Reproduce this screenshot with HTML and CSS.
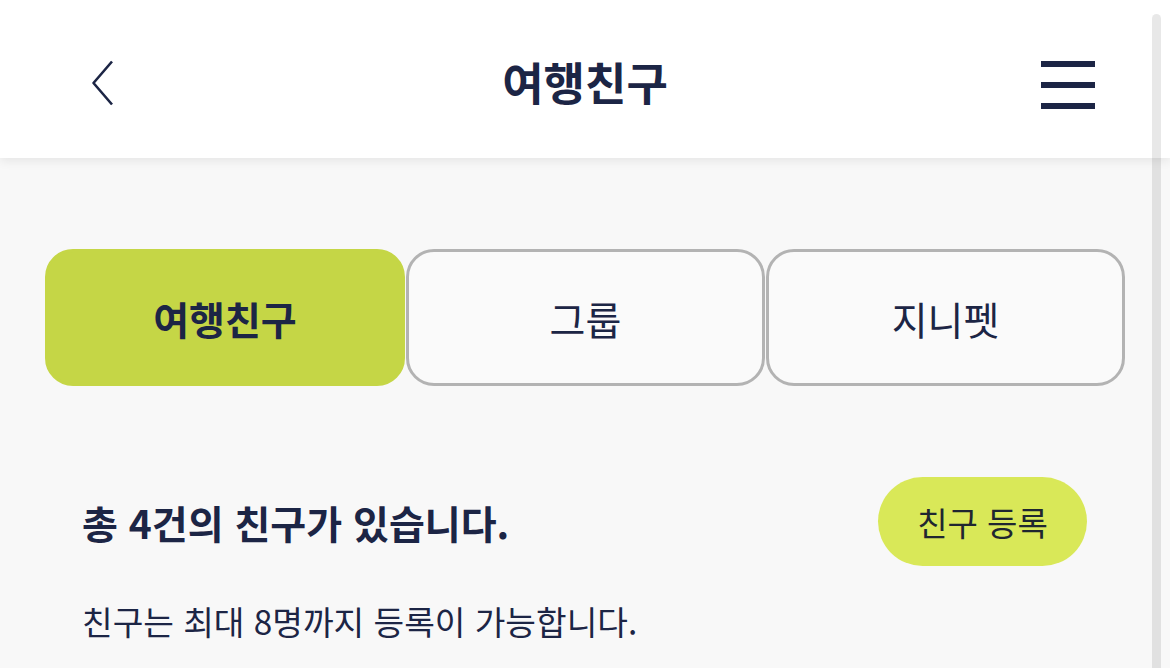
FILE: index.html
```html
<!DOCTYPE html>
<html lang="ko">
<head>
    <meta charset="UTF-8">
    <meta name="viewport" content="width=device-width, initial-scale=1.0">
    <title>여행친구</title>
    <link rel="stylesheet" href="styles.css">
</head>
<body>
    <header class="topbar">
        <button class="back" aria-label="뒤로">
            <svg width="26" height="46" viewBox="0 0 26 46">
                <path d="M22 1.5 L3.5 23 L22 44.5" fill="none" stroke="#1c2545" stroke-width="2.6" stroke-linejoin="round"/>
            </svg>
        </button>
        <h1 class="title">여행친구</h1>
        <button class="menu" aria-label="메뉴">
            <span></span>
            <span></span>
            <span></span>
        </button>
    </header>

    <main class="content">
        <nav class="tabs">
            <a class="tab active">여행친구</a>
            <a class="tab">그룹</a>
            <a class="tab">지니펫</a>
        </nav>

        <div class="summary">
            <h2 class="count">총 4건의 친구가 있습니다.</h2>
            <button class="add">친구 등록</button>
        </div>
        <p class="notice">친구는 최대 8명까지 등록이 가능합니다.</p>
    </main>

    <div class="scrollbar"></div>
</body>
</html>
```

FILE: styles.css
```css
body {
    margin: 0;
    background-color: #f8f8f8;
    font-family: "Noto Sans CJK KR", "Noto Sans", sans-serif;
    color: #1c2545;
    height: 668px;
    overflow: hidden;
}

.topbar {
    height: 158px;
    background: white;
    display: grid;
    grid-template-columns: 1fr auto 1fr;
    align-items: center;
    padding: 0 75px;
    box-shadow: 0 3px 10px rgba(0, 0, 0, 0.08);
    position: relative;
}

.back {
    justify-self: start;
    background: none;
    border: none;
    padding: 0;
    display: flex;
    margin: 8px 0 0 15px;
}

.title {
    margin: 0;
    font-size: 45px;
    font-weight: 700;
    margin-top: 4px;
}

.menu {
    justify-self: end;
    width: 54px;
    height: 48px;
    background: none;
    border: none;
    padding: 0;
    display: flex;
    flex-direction: column;
    justify-content: space-between;
    margin-top: 11px;
}

.menu span {
    display: block;
    height: 6px;
    background: #1c2545;
}

.content {
    padding: 91px 46px 0 45px;
}

.tabs {
    display: grid;
    grid-template-columns: 360px 359px 359px;
    gap: 1px;
}

.tab {
    height: 137px;
    box-sizing: border-box;
    border: 3px solid #b3b3b3;
    border-radius: 28px;
    background: #fafafa;
    display: flex;
    align-items: center;
    justify-content: center;
    font-size: 39px;
}

.tab.active {
    background: #c5d646;
    border-color: #c5d646;
    font-weight: 700;
}

.summary {
    display: flex;
    justify-content: space-between;
    align-items: center;
    padding: 91px 37px 0 37px;
}

.count {
    margin: 0;
    font-size: 39px;
    font-weight: 700;
}

.add {
    width: 209px;
    height: 89px;
    border: none;
    border-radius: 45px;
    background: #d9e858;
    color: #1f2630;
    font-family: inherit;
    font-size: 33px;
}

.notice {
    margin: 30px 0 0 37px;
    font-size: 33.3px;
}

.scrollbar {
    position: fixed;
    top: 14px;
    bottom: -10px;
    left: 1152px;
    width: 9px;
    border-radius: 5px;
    background: rgba(0, 0, 0, 0.09);
}
```
